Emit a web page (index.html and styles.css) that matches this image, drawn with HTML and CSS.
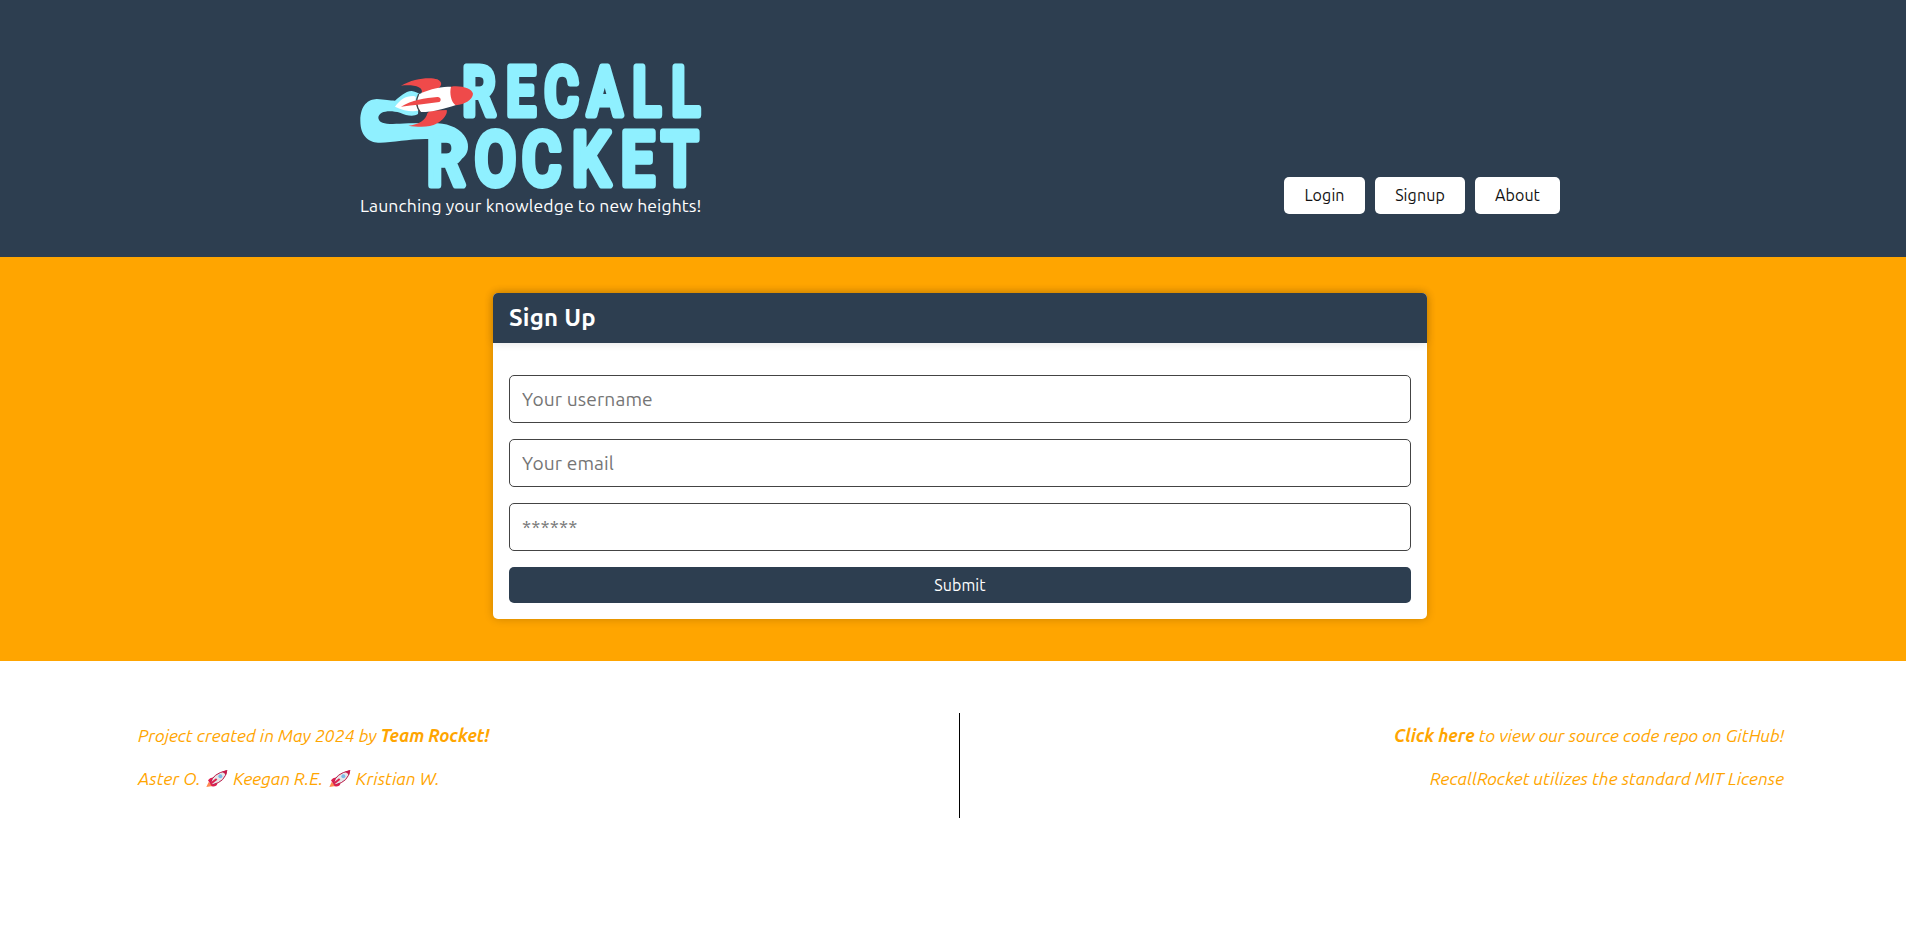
FILE: index.html
```html
<!DOCTYPE html>
<html lang="en">
<head>
<meta charset="utf-8">
<title>Recall Rocket</title>
<link rel="stylesheet" href="styles.css">
</head>
<body>
<header class="header">
  <div class="header-inner">
    <div class="brand">
      <svg class="logo" viewBox="0 0 341 125" role="img" aria-label="Recall Rocket">
        <g transform="translate(-10 -14) scale(.33333)">
          <path class="trail" d="M135 152C150 140 165 124 185 123C195 124 202 128 209 132L204 192C190 201 170 197 150 188C120 180 86 182 85 204C88 225 120 223 175 220L240 219C280 217 322 227 342 256Q354 272 354 290C354 312 340 326 320 336L306 318Q318 296 308 280L290 267L232 267C180 266 130 278 90 278C60 278 31 262 31 212C31 165 55 148 80 147C105 148 120 152 135 152Z"/>
        </g>
        <g class="lettering">
          <text transform="scale(.77 1)" y="51" font-size="67.5" x="133 190 239.5 295.5 354 404.5">RECALL</text>
          <text transform="scale(.8 1)" y="121.5" font-size="75" x="83.5 143.5 202.5 265 326 377">ROCKET</text>
        </g>
        <g transform="translate(-10 -14) scale(.33333)">
          <path class="red" d="M153 107C190 85 240 80 262 88C280 97 275 110 262 116L215 130C222 110 190 103 153 107ZM175 227C205 225 228 210 232 190L240 182L290 180C295 195 270 222 240 228C220 232 195 230 175 227Z"/>
          <path class="white" d="M135 170C150 150 165 138 190 138C200 140 198 142 196 150L204 182C185 186 160 182 135 170Z"/>
          <path class="white" d="M207 133C240 115 280 110 303 110L318 165C280 178 240 187 212 186C198 170 200 150 207 133Z"/>
          <path class="rim" d="M206 132C197 150 198 170 211 187"/>
          <path class="red" d="M303 110C335 106 365 115 369 131C368 150 345 162 317 166C303 155 298 130 303 110ZM153 170C185 150 225 144 262 141C273 140 275 153 268 156C230 162 190 165 153 170Z"/>
        </g>
      </svg>
      <p class="tagline"><span>Launching your knowledge to new heights!</span></p>
    </div>
    <nav class="nav">
      <a class="btn login">Login</a>
      <a class="btn signup">Signup</a>
      <a class="btn about">About</a>
    </nav>
  </div>
</header>
<main class="main">
  <section class="card">
    <h2 class="card-head"><span>Sign Up</span></h2>
    <form class="form">
      <input class="field name" type="text" placeholder="Your username">
      <input class="field mail" type="text" placeholder="Your email">
      <input class="field pass" type="password" placeholder="******">
      <button class="submit" type="button">Submit</button>
    </form>
  </section>
</main>
<footer class="footer">
  <div class="foot left">
    <p><span>Project created in May 2024 by </span><b>Team Rocket!</b></p>
    <p class="team"><span>Aster O.</span>
      <svg class="rocket" viewBox="0 0 64 54"><path fill="#ff8a50" d="M0 51L7 36L19 48Z"/><path fill="#e01e50" d="M5 31Q13 19 27 24L33 41Q31 51 16 49Z"/><path fill="#e6e7e8" stroke="#ba1747" stroke-width="3" d="M13 39Q18 11 61 2Q57 35 19 44Z"/><path fill="#c51b4b" d="M47 5L63 0L60 14Z"/><circle cx="42" cy="19" r="6" fill="#7bb9e8"/><path stroke="#df1f4e" stroke-width="6" d="M15 40L31 27"/></svg>
      <span>Keegan R.E.</span>
      <svg class="rocket" viewBox="0 0 64 54"><path fill="#ff8a50" d="M0 51L7 36L19 48Z"/><path fill="#e01e50" d="M5 31Q13 19 27 24L33 41Q31 51 16 49Z"/><path fill="#e6e7e8" stroke="#ba1747" stroke-width="3" d="M13 39Q18 11 61 2Q57 35 19 44Z"/><path fill="#c51b4b" d="M47 5L63 0L60 14Z"/><circle cx="42" cy="19" r="6" fill="#7bb9e8"/><path stroke="#df1f4e" stroke-width="6" d="M15 40L31 27"/></svg>
      <span>Kristian W.</span></p>
  </div>
  <div class="rule"></div>
  <div class="foot right">
    <p><b>Click here</b><span class="repo"> to view our source code repo on GitHub!</span></p>
    <p><span>RecallRocket utilizes the standard MIT License</span></p>
  </div>
</footer>
</body>
</html>
```

FILE: styles.css
```css
* { box-sizing: border-box; }
html { overflow: hidden; }
body { margin: 0; width: 1920px; background: #fff; font-family: Ubuntu, "Noto Sans", sans-serif; font-size: 16px; color: #111; }
p, h2 { margin: 0; }
.header { height: 257px; background: #2d3e50; padding-top: 64px; }
.header-inner { width: 1200px; height: 150px; margin: 0 auto; display: flex; justify-content: space-between; align-items: flex-end; }
.brand { height: 150px; }
.logo { display: block; width: 341px; height: 125px; overflow: visible; }
.trail { fill: #8ff0ff; }
.red { fill: #ef4a4a; }
.white { fill: #fff; }
.rim { fill: none; stroke: #4a4547; stroke-width: 4; }
.lettering text { font-family: Roboto, sans-serif; font-weight: 500; fill: #8ff0ff; stroke: #8ff0ff; stroke-width: 6.4px; stroke-linejoin: round; vector-effect: non-scaling-stroke; }
.tagline { height: 34px; line-height: 34px; color: #fff; font-size: 17.6px; letter-spacing: .09px; white-space: nowrap; }
.nav { display: flex; gap: 10px; }
.btn { height: 37px; line-height: 37px; background: #fff; border-radius: 5px; text-align: center; letter-spacing: .1px; }
.login { width: 81px; }
.signup { width: 90px; }
.about { width: 85px; }
.main { height: 404px; background: #ffa500; padding-top: 36px; }
.card { width: 934px; height: 326px; margin: 0 auto; background: #fff; border-radius: 5px; box-shadow: 0 0 10px rgba(0,0,0,.2); }
.card-head { height: 50px; padding-left: 16px; line-height: 49px; font-size: 24px; letter-spacing: .2px; color: #fff; background: #2d3e50; border-radius: 5px 5px 0 0; box-shadow: 0 0 10px rgba(0,0,0,.12); }
.form { display: flex; flex-direction: column; gap: 16px; padding: 32px 16px 16px; }
.field { width: 100%; height: 48px; padding: 0 12px; border: 1px solid #444; border-radius: 5px; font: 19.2px Ubuntu, "Noto Sans", sans-serif; letter-spacing: .12px; background: #fff; }
.field::placeholder { color: #757575; }
.submit { height: 36px; border: 0; border-radius: 5px; background: #2d3e50; color: #fff; font: 16px Ubuntu, "Noto Sans", sans-serif; letter-spacing: .1px; }
.footer { display: flex; justify-content: space-between; padding: 52px 136px 0 138px; font-size: 17.6px; font-style: italic; color: #ffa500; }
.foot { flex: none; width: 824px; display: flex; flex-direction: column; gap: 19px; padding-top: 11px; line-height: 24px; white-space: nowrap; }
.left { width: 821px; }
.foot span, .foot b { white-space: pre; }
.repo { letter-spacing: .03px; }
.right { align-items: flex-end; }
.rule { width: 1px; height: 105px; background: #000; }
.team { display: flex; align-items: center; }
.rocket { width: 22px; height: 18px; margin: 0 5px 0 5.4px; }
```
